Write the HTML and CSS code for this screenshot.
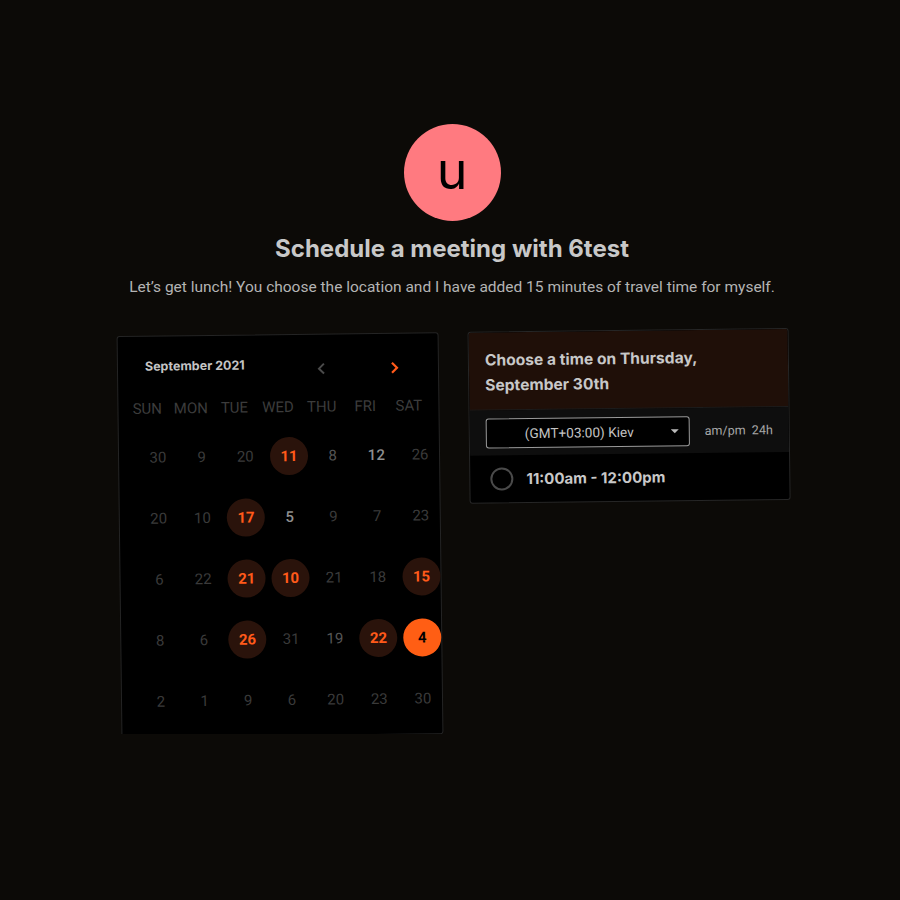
FILE: index.html
```html
<!DOCTYPE html>
<html lang="en">
<head>
<meta charset="utf-8">
<title>Schedule a meeting</title>
<link rel="stylesheet" href="styles.css">
</head>
<body>
<main class="page">
  <div class="avatar">u</div>
  <h1 class="title">Schedule a meeting with 6test</h1>
  <p class="subtitle">Let’s get lunch! You choose the location and I have added 15 minutes of travel time for myself.</p>
  <div class="panels">
    <section class="calendar">
      <div class="cal-head">
        <span class="month">September 2021</span>
        <div class="nav">
          <span class="nav-btn prev"><svg width="10" height="14" viewBox="0 0 10 14"><polyline points="7,2 2,7 7,12" fill="none" stroke="#4a4a4a" stroke-width="2"/></svg></span>
          <span class="nav-btn next"><svg width="10" height="14" viewBox="0 0 10 14"><polyline points="3,2 8,7 3,12" fill="none" stroke="#ff5a1a" stroke-width="2.2"/></svg></span>
        </div>
      </div>
      <div class="weekdays">
        <span>SUN</span><span>MON</span><span>TUE</span><span>WED</span><span>THU</span><span>FRI</span><span>SAT</span>
      </div>
      <div class="days">
        <span class="day">30</span><span class="day">9</span><span class="day">20</span><span class="day"><b class="avail">11</b></span><span class="day mid">8</span><span class="day lit">12</span><span class="day">26</span>
        <span class="day">20</span><span class="day">10</span><span class="day"><b class="avail">17</b></span><span class="day lit">5</span><span class="day">9</span><span class="day">7</span><span class="day">23</span>
        <span class="day">6</span><span class="day">22</span><span class="day"><b class="avail">21</b></span><span class="day"><b class="avail">10</b></span><span class="day">21</span><span class="day">18</span><span class="day"><b class="avail">15</b></span>
        <span class="day">8</span><span class="day">6</span><span class="day"><b class="avail">26</b></span><span class="day">31</span><span class="day mid">19</span><span class="day"><b class="avail">22</b></span><span class="day"><b class="avail selected">4</b></span>
        <span class="day">2</span><span class="day">1</span><span class="day">9</span><span class="day">6</span><span class="day">20</span><span class="day">23</span><span class="day">30</span>
      </div>
    </section>
    <section class="times">
      <div class="times-head">Choose a time on Thursday,<br>September 30th</div>
      <div class="tz-row">
        <div class="tz-select"><span class="tz-text">(GMT+03:00) Kiev</span><span class="caret"></span></div>
        <span class="fmt">am/pm&nbsp;&nbsp;24h</span>
      </div>
      <div class="slot">
        <span class="radio"></span>
        <span class="slot-text">11:00am - 12:00pm</span>
      </div>
    </section>
  </div>
</main>
</body>
</html>
```
FILE: styles.css
```css
html, body {
  margin: 0;
  background: #0c0a07;
}
body {
  font-family: Roboto, "Liberation Sans", sans-serif;
  color: #c8c8c8;
}
.page {
  display: flex;
  flex-direction: column;
  align-items: center;
  padding-top: 124px;
  padding-left: 4px;
}
.avatar {
  width: 97px;
  height: 97px;
  border-radius: 50%;
  background: #ff7a80;
  color: #000;
  font-family: Inter, Roboto, sans-serif;
  font-size: 52px;
  line-height: 1;
  display: flex;
  align-items: center;
  justify-content: center;
  padding-bottom: 4px;
  box-sizing: border-box;
}
.title {
  margin: 13px 0 0;
  font-family: Inter, Roboto, sans-serif;
  font-weight: 700;
  font-size: 24px;
  line-height: 29px;
  color: #c8c8c8;
}
.subtitle {
  margin: 14px 0 0;
  font-size: 15.5px;
  line-height: 20px;
  color: #b4b4b4;
}
.panels {
  margin: 35px 0 0 5px;
  display: flex;
  gap: 29px;
  align-items: flex-start;
  transform: rotate(-0.7deg);
}
.calendar {
  width: 322px;
  height: 402px;
  box-sizing: border-box;
  background: #000;
  border: 1px solid #242424;
  border-radius: 3px;
}
.cal-head {
  height: 63px;
  display: flex;
  align-items: center;
  padding: 0 32px 0 27px;
}
.month {
  font-family: Inter, Roboto, sans-serif;
  font-weight: 700;
  font-size: 12.5px;
  color: #c4c4c4;
  padding-bottom: 4px;
}
.nav {
  margin-left: auto;
  display: flex;
  gap: 48px;
  padding-top: 5px;
}
.nav-btn {
  width: 24px;
  height: 16px;
  display: flex;
  align-items: center;
  justify-content: center;
}
.weekdays {
  display: grid;
  grid-template-columns: repeat(7, 43.6px);
  margin-left: 7px;
  height: 18px;
  line-height: 18px;
  font-size: 15px;
  color: #3c3c3c;
  text-align: center;
}
.days {
  display: grid;
  grid-template-columns: repeat(7, 43.7px);
  grid-auto-rows: 61px;
  margin: 9px 0 0 17px;
}
.day {
  display: flex;
  align-items: center;
  justify-content: center;
  font-size: 15px;
  color: #3a3a3a;
}
.day.mid { color: #555; }
.day.lit { color: #8e8e8e; font-weight: 500; }
.avail {
  width: 38px;
  height: 38px;
  border-radius: 50%;
  background: #2a130b;
  color: #ff5a1a;
  font-weight: 700;
  display: flex;
  align-items: center;
  justify-content: center;
}
.avail.selected {
  background: #ff5e14;
  color: #000;
}
.times {
  width: 321px;
  box-sizing: border-box;
  background: #000;
  border: 1px solid #262626;
  border-radius: 3px;
  overflow: hidden;
}
.times-head {
  background: #1f0f08;
  padding: 15px 16px 12px;
  font-family: Inter, Roboto, sans-serif;
  font-weight: 700;
  font-size: 15.6px;
  line-height: 25px;
  color: #c8c8c8;
  border-bottom: 1px solid #1c1c1c;
}
.tz-row {
  height: 45px;
  background: #0e0e0e;
  display: flex;
  align-items: center;
  padding: 0 16px;
}
.tz-select {
  width: 204px;
  height: 30px;
  box-sizing: border-box;
  border: 1px solid #9a9a9a;
  border-radius: 3px;
  background: #000;
  display: flex;
  align-items: center;
  padding: 0 10px 0 38px;
}
.tz-text {
  font-size: 13.6px;
  color: #c4c4c4;
}
.caret {
  margin-left: auto;
  width: 0;
  height: 0;
  border-left: 4px solid transparent;
  border-right: 4px solid transparent;
  border-top: 4px solid #bbb;
}
.fmt {
  margin-left: 15px;
  font-size: 12.5px;
  color: #a8a8a8;
}
.slot {
  height: 47px;
  display: flex;
  align-items: center;
  padding-left: 20px;
  gap: 13px;
}
.radio {
  width: 23px;
  height: 23px;
  box-sizing: border-box;
  border-radius: 50%;
  border: 2px solid #4a4a4a;
}
.slot-text {
  font-family: Inter, Roboto, sans-serif;
  font-weight: 700;
  font-size: 15px;
  color: #c8c8c8;
}
```
